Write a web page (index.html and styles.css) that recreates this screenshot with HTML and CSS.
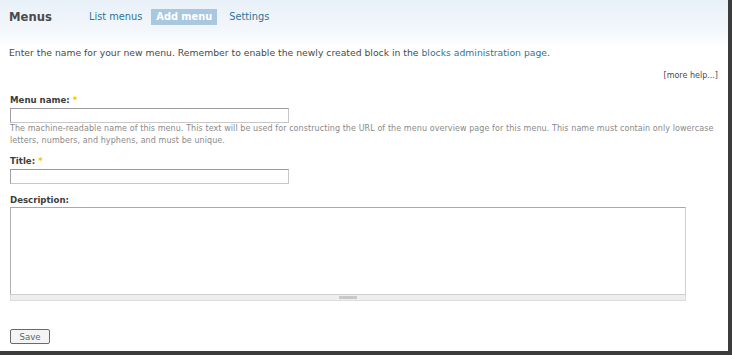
FILE: index.html
```html
<!DOCTYPE html>
<html>
<head>
<meta charset="utf-8">
<link rel="stylesheet" href="styles.css">
</head>
<body>
<div class="frame">
  <div class="header">
    <h2 class="title">Menus</h2>
    <ul class="tabs">
      <li><a href="#">List menus</a></li>
      <li class="active"><a href="#">Add menu</a></li>
      <li><a href="#">Settings</a></li>
    </ul>
  </div>
  <div class="content">
    <p class="intro">Enter the name for your new menu. Remember to enable the newly created block in the <a href="#">blocks administration page</a>.</p>
    <div class="more-help">[more help...]</div>
    <div class="field field-name">
      <label>Menu name: <span class="req">*</span></label>
      <input type="text" class="text">
      <div class="description">The machine-readable name of this menu. This text will be used for constructing the URL of the menu overview page for this menu. This name must contain only lowercase letters, numbers, and hyphens, and must be unique.</div>
    </div>
    <div class="field field-title">
      <label>Title: <span class="req">*</span></label>
      <input type="text" class="text">
    </div>
    <div class="field field-desc">
      <label>Description:</label>
      <div class="textarea-wrap">
        <textarea></textarea>
        <div class="grippie"><span class="grip"></span></div>
      </div>
    </div>
    <button class="save">Save</button>
  </div>
</div>
</body>
</html>
```

FILE: styles.css
```css
* { box-sizing: border-box; }
html, body { margin: 0; padding: 0; background: #fff; }
body {
  width: 732px;
  height: 355px;
  overflow: hidden;
  font-family: "DejaVu Sans", Verdana, sans-serif;
  font-size: 9.25px;
  color: #494949;
}
.frame {
  width: 732px;
  height: 355px;
  border-right: 4px solid #3c3c3c;
  border-bottom: 4px solid #3c3c3c;
  background: linear-gradient(to bottom, #e8f0f8 0px, #f3f7fb 30px, #ffffff 48px);
  display: flex;
  flex-direction: column;
}
.header {
  display: flex;
  align-items: center;
  height: 33px;
  padding-left: 9px;
}
.title {
  margin: 0;
  font-size: 11.6px;
  font-weight: bold;
  color: #4a4a4a;
  width: 80px;
}
.tabs {
  list-style: none;
  margin: 0;
  padding: 0;
  display: flex;
  gap: 9px;
  font-size: 9.8px;
}
.tabs a {
  display: block;
  color: #2f7494;
  text-decoration: none;
  padding: 2px 0;
}
.tabs li.active a {
  background: #a9c8e0;
  color: #fff;
  font-weight: bold;
  padding: 2px 5px;
  line-height: 12px;
}
.tabs li.active + li { margin-left: 3px; }
.content {
  padding: 0 10px 0 10px;
  display: flex;
  flex-direction: column;
}
.intro {
  margin: 12px 0 0 -1px;
  line-height: 15px;
}
.intro a { color: #2f7494; text-decoration: none; }
.more-help {
  text-align: right;
  font-size: 8px;
  margin: 10px 0 0 0;
  line-height: 12px;
  color: #4a4a4a;
}
.field { display: flex; flex-direction: column; align-items: flex-start; }
.field label {
  font-weight: bold;
  font-size: 8.6px;
  color: #3d3d3d;
  line-height: 12px;
}
.req { color: #f5c400; }
.field-name { margin-top: 12px; }
.field-title { margin-top: 8px; }
.field-desc { margin-top: 10px; }
input.text {
  width: 279px;
  height: 15px;
  margin: 2px 0 0 0;
  border: 1px solid #a9a9a9;
  border-color: #9a9a9a #c8c8c8 #c8c8c8 #a0a0a0;
  background: #fff;
}
.description {
  font-size: 8px;
  letter-spacing: 0.08px;
  line-height: 12px;
  color: #8a8a8a;
  margin-top: 0;
  width: 716px;
}
.textarea-wrap { width: 676px; margin-top: 1px; }
textarea {
  display: block;
  width: 676px;
  height: 88px;
  margin: 0;
  border: 1px solid #b9b9b9;
  border-color: #a9a9a9 #cfcfcf #cfcfcf #b0b0b0;
  resize: none;
}
.grippie {
  height: 6px;
  background: #eeeeee;
  border: 1px solid #dddddd;
  border-top: none;
  display: flex;
  justify-content: center;
  align-items: center;
}
.grip {
  width: 18px;
  height: 3px;
  background: #c8c8c8;
}
.save {
  margin-top: 28px;
  width: 40px;
  height: 15px;
  padding: 0;
  font-family: "DejaVu Sans", Verdana, sans-serif;
  font-size: 8.6px;
  color: #666;
  background: #f4f4f4;
  border: 1px solid #6a6a6a;
  border-radius: 2px;
  line-height: 12px;
}
```
